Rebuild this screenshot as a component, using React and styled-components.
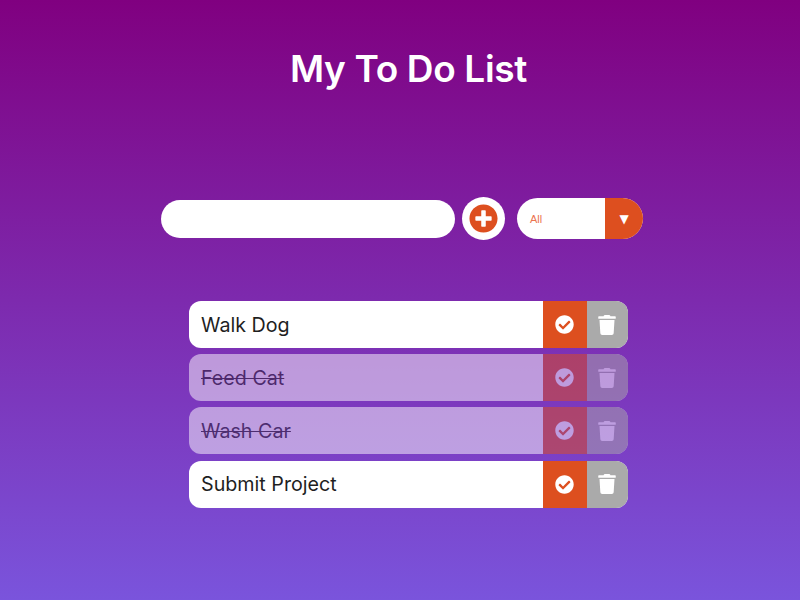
import React from 'react'
import styled, { createGlobalStyle } from 'styled-components'
import { FaCheckCircle, FaPlusCircle, FaTrash } from 'react-icons/fa'

const GlobalStyle = createGlobalStyle`
  * {
    box-sizing: border-box;
  }
  body {
    margin: 0;
    font-family: "Inter", "Liberation Sans", sans-serif;
  }
`

const Page = styled.div`
  height: 600px;
  overflow: hidden;
  display: flex;
  flex-direction: column;
  align-items: center;
  color: white;
  background: linear-gradient(180deg, #800080 0%, #7a54dc 100%);
`

const Title = styled.h1`
  margin: 46px 0 0 17px;
  height: 46px;
  font-size: 37px;
  line-height: 46px;
  font-weight: 600;
  letter-spacing: -0.35px;
`

const Form = styled.form`
  margin: 105px 0 0 4px;
  display: flex;
  align-items: center;
`

const TextInput = styled.input`
  width: 294px;
  height: 38px;
  border: none;
  border-radius: 19px;
  background: white;
  outline: none;
`

const AddButton = styled.button`
  width: 43px;
  height: 43px;
  margin-left: 7px;
  padding: 0;
  border: none;
  border-radius: 50%;
  background: white;
  color: #dd4f1f;
  display: flex;
  align-items: center;
  justify-content: center;
  font-size: 29px;
`

const Select = styled.div`
  width: 126px;
  height: 41px;
  margin-left: 12px;
  border-radius: 21px;
  overflow: hidden;
  background: white;
  display: flex;
  align-items: center;
`

const SelectLabel = styled.span`
  flex: 1;
  padding-left: 13px;
  font-family: "Liberation Sans", Arial, sans-serif;
  font-size: 11px;
  color: #ec7450;
`

const SelectArrow = styled.span`
  width: 38px;
  height: 100%;
  background: #dd4f1f;
  color: white;
  display: flex;
  align-items: center;
  justify-content: center;
  font-family: "DejaVu Sans", sans-serif;
  font-size: 12px;
`

const List = styled.ul`
  margin: 61px 0 0 17px;
  padding: 0;
  list-style: none;
  width: 439px;
  display: flex;
  flex-direction: column;
  gap: 6.2px;
`

const Row = styled.li`
  height: 47px;
  border-radius: 12px;
  overflow: hidden;
  background: white;
  display: flex;
  align-items: stretch;
  opacity: ${(p) => (p.$done ? 0.5 : 1)};
`

const Label = styled.span`
  flex: 1;
  padding-left: 12px;
  align-self: center;
  font-size: 19.7px;
  color: #1f1f1f;
  text-decoration: ${(p) => (p.$done ? 'line-through' : 'none')};
`

const IconCell = styled.button`
  width: ${(p) => p.$width}px;
  padding: 0;
  border: none;
  background: ${(p) => p.$bg};
  color: white;
  display: flex;
  align-items: center;
  justify-content: center;
  font-size: ${(p) => p.$size}px;
`

const todos = [
  { text: 'Walk Dog', done: false },
  { text: 'Feed Cat', done: true },
  { text: 'Wash Car', done: true },
  { text: 'Submit Project', done: false },
]

export default function App() {
  return (
    <Page>
      <GlobalStyle />
      <Title>My To Do List</Title>
      <Form>
        <TextInput type="text" />
        <AddButton type="button"><FaPlusCircle /></AddButton>
        <Select>
          <SelectLabel>All</SelectLabel>
          <SelectArrow>▼</SelectArrow>
        </Select>
      </Form>
      <List>
        {todos.map((item) => (
          <Row key={item.text} $done={item.done}>
            <Label $done={item.done}>{item.text}</Label>
            <IconCell $width={43.5} $bg="#dd4f1f" $size={19}><FaCheckCircle /></IconCell>
            <IconCell $width={41.5} $bg="#aaaaaa" $size={20}><FaTrash /></IconCell>
          </Row>
        ))}
      </List>
    </Page>
  )
}
